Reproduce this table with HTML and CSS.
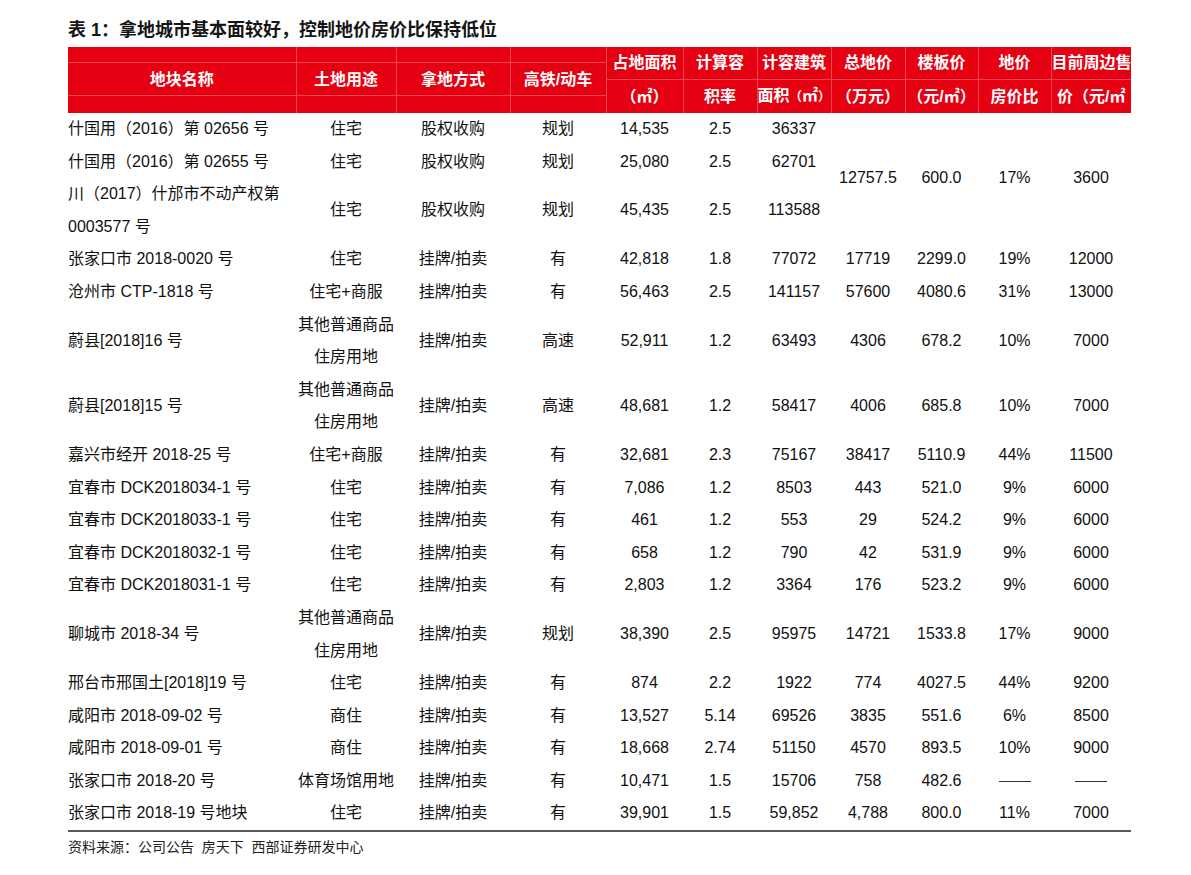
FILE: index.html
```html
<!DOCTYPE html>
<html lang="zh">
<head>
<meta charset="utf-8">
<title>表 1</title>
<link rel="stylesheet" href="styles.css">
</head>
<body>
<div class="page">
  <h1 class="title">表 1：拿地城市基本面较好，控制地价房价比保持低位</h1>
  <table class="data">
    <colgroup>
      <col class="c1"><col class="c2"><col class="c3"><col class="c4"><col class="c5"><col class="c6"><col class="c7"><col class="c8"><col class="c9"><col class="c10"><col class="c11">
    </colgroup>
    <thead>
      <tr class="h1">
        <th rowspan="2" class="rs">地块名称</th>
        <th rowspan="2" class="rs">土地用途</th>
        <th rowspan="2" class="rs">拿地方式</th>
        <th rowspan="2" class="rs">高铁/动车</th>
        <th class="top">占地面积</th>
        <th class="top">计算容</th>
        <th class="top">计容建筑</th>
        <th class="top">总地价</th>
        <th class="top">楼板价</th>
        <th class="top">地价</th>
        <th class="top last">目前周边售</th>
      </tr>
      <tr class="h2">
        <th>（㎡）</th>
        <th>积率</th>
        <th>面积<span class="np">（</span>㎡<span class="np">）</span></th>
        <th>（万元）</th>
        <th>（元/㎡）</th>
        <th>房价比</th>
        <th class="last">价（元/㎡</th>
      </tr>
    </thead>
    <tbody>
      <tr><td class="name">什国用（2016）第 02656 号</td><td>住宅</td><td>股权收购</td><td>规划</td><td>14,535</td><td>2.5</td><td>36337</td><td rowspan="3">12757.5</td><td rowspan="3">600.0</td><td rowspan="3">17%</td><td rowspan="3">3600</td></tr>
      <tr><td class="name">什国用（2016）第 02655 号</td><td>住宅</td><td>股权收购</td><td>规划</td><td>25,080</td><td>2.5</td><td>62701</td></tr>
      <tr><td class="name">川（2017）什邡市不动产权第<br>0003577 号</td><td>住宅</td><td>股权收购</td><td>规划</td><td>45,435</td><td>2.5</td><td>113588</td></tr>
      <tr><td class="name">张家口市 2018-0020 号</td><td>住宅</td><td>挂牌/拍卖</td><td>有</td><td>42,818</td><td>1.8</td><td>77072</td><td>17719</td><td>2299.0</td><td>19%</td><td>12000</td></tr>
      <tr><td class="name">沧州市 CTP-1818 号</td><td>住宅+商服</td><td>挂牌/拍卖</td><td>有</td><td>56,463</td><td>2.5</td><td>141157</td><td>57600</td><td>4080.6</td><td>31%</td><td>13000</td></tr>
      <tr><td class="name">蔚县[2018]16 号</td><td>其他普通商品<br>住房用地</td><td>挂牌/拍卖</td><td>高速</td><td>52,911</td><td>1.2</td><td>63493</td><td>4306</td><td>678.2</td><td>10%</td><td>7000</td></tr>
      <tr><td class="name">蔚县[2018]15 号</td><td>其他普通商品<br>住房用地</td><td>挂牌/拍卖</td><td>高速</td><td>48,681</td><td>1.2</td><td>58417</td><td>4006</td><td>685.8</td><td>10%</td><td>7000</td></tr>
      <tr><td class="name">嘉兴市经开 2018-25 号</td><td>住宅+商服</td><td>挂牌/拍卖</td><td>有</td><td>32,681</td><td>2.3</td><td>75167</td><td>38417</td><td>5110.9</td><td>44%</td><td>11500</td></tr>
      <tr><td class="name">宜春市 DCK2018034-1 号</td><td>住宅</td><td>挂牌/拍卖</td><td>有</td><td>7,086</td><td>1.2</td><td>8503</td><td>443</td><td>521.0</td><td>9%</td><td>6000</td></tr>
      <tr><td class="name">宜春市 DCK2018033-1 号</td><td>住宅</td><td>挂牌/拍卖</td><td>有</td><td>461</td><td>1.2</td><td>553</td><td>29</td><td>524.2</td><td>9%</td><td>6000</td></tr>
      <tr><td class="name">宜春市 DCK2018032-1 号</td><td>住宅</td><td>挂牌/拍卖</td><td>有</td><td>658</td><td>1.2</td><td>790</td><td>42</td><td>531.9</td><td>9%</td><td>6000</td></tr>
      <tr><td class="name">宜春市 DCK2018031-1 号</td><td>住宅</td><td>挂牌/拍卖</td><td>有</td><td>2,803</td><td>1.2</td><td>3364</td><td>176</td><td>523.2</td><td>9%</td><td>6000</td></tr>
      <tr><td class="name">聊城市 2018-34 号</td><td>其他普通商品<br>住房用地</td><td>挂牌/拍卖</td><td>规划</td><td>38,390</td><td>2.5</td><td>95975</td><td>14721</td><td>1533.8</td><td>17%</td><td>9000</td></tr>
      <tr><td class="name">邢台市邢国土[2018]19 号</td><td>住宅</td><td>挂牌/拍卖</td><td>有</td><td>874</td><td>2.2</td><td>1922</td><td>774</td><td>4027.5</td><td>44%</td><td>9200</td></tr>
      <tr><td class="name">咸阳市 2018-09-02 号</td><td>商住</td><td>挂牌/拍卖</td><td>有</td><td>13,527</td><td>5.14</td><td>69526</td><td>3835</td><td>551.6</td><td>6%</td><td>8500</td></tr>
      <tr><td class="name">咸阳市 2018-09-01 号</td><td>商住</td><td>挂牌/拍卖</td><td>有</td><td>18,668</td><td>2.74</td><td>51150</td><td>4570</td><td>893.5</td><td>10%</td><td>9000</td></tr>
      <tr><td class="name">张家口市 2018-20 号</td><td>体育场馆用地</td><td>挂牌/拍卖</td><td>有</td><td>10,471</td><td>1.5</td><td>15706</td><td>758</td><td>482.6</td><td><span class="dash"></span></td><td><span class="dash"></span></td></tr>
      <tr class="lastrow"><td class="name">张家口市 2018-19 号地块</td><td>住宅</td><td>挂牌/拍卖</td><td>有</td><td>39,901</td><td>1.5</td><td>59,852</td><td>4,788</td><td>800.0</td><td>11%</td><td>7000</td></tr>
    </tbody>
  </table>
  <p class="source">资料来源：公司公告&nbsp;&nbsp;房天下&nbsp;&nbsp;西部证券研发中心</p>
</div>
</body>
</html>
```

FILE: styles.css
```css
html, body {
  margin: 0;
  padding: 0;
  background: #ffffff;
}

body {
  font-family: "Liberation Sans", "Noto Sans CJK SC", sans-serif;
  color: #111111;
}

.page {
  padding: 18px 0 0 68px;
}

.title {
  margin: 0 0 5px 0;
  font-size: 18px;
  line-height: 24px;
  font-weight: bold;
  color: #151515;
}

.data {
  width: 1063px;
  table-layout: fixed;
  border-collapse: collapse;
  border-spacing: 0;
}

.c1 { width: 228px; }
.c2 { width: 100px; }
.c3 { width: 114px; }
.c4 { width: 96px; }
.c5 { width: 77px; }
.c6 { width: 74px; }
.c7 { width: 74px; }
.c8 { width: 74px; }
.c9 { width: 73px; }
.c10 { width: 73px; }
.c11 { width: 80px; }

.data th {
  background: #e50012;
  color: #ffffff;
  font-size: 16px;
  font-weight: bold;
  padding: 0;
  text-align: center;
  vertical-align: middle;
  white-space: nowrap;
  border-right: 1px solid #ee4450;
}

.data th.last {
  border-right: none;
}

.data tr.h1 th {
  height: 32px;
  line-height: 32px;
}

.data tr.h2 th {
  height: 32px;
  line-height: 32px;
}

.data th.top {
  border-bottom: 1px solid #ee4450;
}

.data th.rs {
  background-color: #e50012;
  background-image: linear-gradient(to bottom,
    transparent 15px, #ee4450 15px, #ee4450 16px, transparent 16px,
    transparent 48px, #ee4450 48px, #ee4450 49px, transparent 49px);
}

.np {
  font-size: 12.5px;
}

.data td {
  font-size: 16px;
  line-height: 32.6px;
  padding: 0;
  text-align: center;
  vertical-align: middle;
  white-space: nowrap;
  color: #111111;
}

.data td.name {
  text-align: left;
}

.data tr.lastrow td {
  border-bottom: 2px solid #5a5a5a;
}

.dash {
  display: inline-block;
  width: 32px;
  height: 0;
  border-top: 1.5px solid #333333;
  vertical-align: middle;
}

.source {
  margin: 6px 0 0 0;
  font-size: 14px;
  line-height: 18px;
  color: #222222;
}
```
